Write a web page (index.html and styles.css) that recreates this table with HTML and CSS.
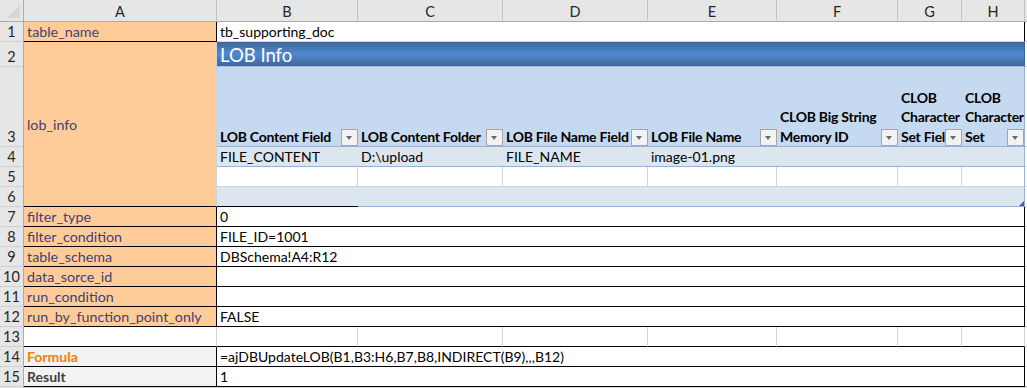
FILE: index.html
```html
<!DOCTYPE html>
<html>
<head>
<meta charset="utf-8">
<link rel="stylesheet" href="styles.css">
</head>
<body>
<div class="sheet">
  <!-- header row -->
  <div class="corner"><span class="tri"></span></div>
  <div class="ch">A</div><div class="ch">B</div><div class="ch">C</div><div class="ch">D</div>
  <div class="ch">E</div><div class="ch">F</div><div class="ch">G</div><div class="ch">H</div><div class="ch last"></div>

  <!-- row 1 -->
  <div class="rh">1</div>
  <div class="c inp b-r b-b">table_name</div>
  <div class="c merged b-r">tb_supporting_doc</div>
  <div class="c g"></div>

  <!-- rows 2-6 -->
  <div class="rh">2</div>
  <div class="c inp lob">lob_info</div>
  <div class="c banner">LOB Info</div>
  <div class="c g"></div>

  <div class="rh">3</div>
  <div class="c th">LOB Content Field<span class="dd"></span></div>
  <div class="c th">LOB Content Folder<span class="dd"></span></div>
  <div class="c th">LOB File Name Field<span class="dd"></span></div>
  <div class="c th">LOB File Name<span class="dd"></span></div>
  <div class="c th">CLOB Big String<br>Memory ID<span class="dd"></span></div>
  <div class="c th">CLOB<br>Character<br>Set Field<span class="dd"></span></div>
  <div class="c th tr">CLOB<br>Character<br>Set<span class="dd"></span></div>
  <div class="c g"></div>

  <div class="rh">4</div>
  <div class="c band">FILE_CONTENT</div>
  <div class="c band">D:\upload</div>
  <div class="c band">FILE_NAME</div>
  <div class="c band">image-01.png</div>
  <div class="c band"></div>
  <div class="c band"></div>
  <div class="c band tr"></div>
  <div class="c g"></div>

  <div class="rh">5</div>
  <div class="c plain"></div>
  <div class="c plain"></div>
  <div class="c plain"></div>
  <div class="c plain"></div>
  <div class="c plain"></div>
  <div class="c plain"></div>
  <div class="c plain tr"></div>
  <div class="c g"></div>

  <div class="rh">6</div>
  <div class="c band bk-b"></div>
  <div class="c band"></div>
  <div class="c band"></div>
  <div class="c band"></div>
  <div class="c band"></div>
  <div class="c band"></div>
  <div class="c band tr"><span class="handle"></span></div>
  <div class="c g"></div>

  <!-- rows 7-12 -->
  <div class="rh">7</div>
  <div class="c inp b-r b-b">filter_type</div>
  <div class="c merged b-r b-b">0</div>
  <div class="c g"></div>

  <div class="rh">8</div>
  <div class="c inp b-r b-b">filter_condition</div>
  <div class="c merged b-r b-b">FILE_ID=1001</div>
  <div class="c g"></div>

  <div class="rh">9</div>
  <div class="c inp b-r b-b">table_schema</div>
  <div class="c merged b-r b-b">DBSchema!A4:R12</div>
  <div class="c g"></div>

  <div class="rh">10</div>
  <div class="c inp b-r b-b">data_sorce_id</div>
  <div class="c merged b-r b-b"></div>
  <div class="c g"></div>

  <div class="rh">11</div>
  <div class="c inp b-r b-b">run_condition</div>
  <div class="c merged b-r b-b"></div>
  <div class="c g"></div>

  <div class="rh">12</div>
  <div class="c inp b-r b-b">run_by_function_point_only</div>
  <div class="c merged b-r b-b">FALSE</div>
  <div class="c g"></div>

  <!-- row 13 -->
  <div class="rh">13</div>
  <div class="c plain bk-b"></div>
  <div class="c plain bk-b"></div>
  <div class="c plain bk-b"></div>
  <div class="c plain bk-b"></div>
  <div class="c plain bk-b"></div>
  <div class="c plain bk-b"></div>
  <div class="c plain bk-b"></div>
  <div class="c plain bk-b"></div>
  <div class="c g"></div>

  <!-- rows 14-15 -->
  <div class="rh">14</div>
  <div class="c calc b-r b-b">Formula</div>
  <div class="c merged b-r b-b">=ajDBUpdateLOB(B1,B3:H6,B7,B8,INDIRECT(B9),,,B12)</div>
  <div class="c g"></div>

  <div class="rh">15</div>
  <div class="c out b-r b-b">Result</div>
  <div class="c merged b-r b-b">1</div>
  <div class="c g"></div>

  <!-- filler row -->
  <div class="rh fill"></div>
  <div class="c plain"></div><div class="c plain"></div><div class="c plain"></div><div class="c plain"></div>
  <div class="c plain"></div><div class="c plain"></div><div class="c plain"></div><div class="c plain"></div><div class="c g"></div>
</div>
</body>
</html>
```
FILE: styles.css
```css
* { box-sizing: border-box; }
html, body { margin: 0; padding: 0; background: #fff; }
body { width: 1027px; height: 388px; overflow: hidden; }

.sheet {
  display: grid;
  grid-template-columns: 24px 193px 141px 145px 145px 129px 121px 64px 63px 1fr;
  grid-template-rows: 22px 20px 25px 80px repeat(12, 20px) 1fr;
  width: 1027px;
  height: 388px;
  font-family: Lato, "Liberation Sans", sans-serif;
  font-size: 14px;
  color: #000;
}

.corner {
  background: #e6e6e6;
  border-right: 1px solid #ababab;
  border-bottom: 1px solid #ababab;
  position: relative;
}
.corner .tri {
  position: absolute;
  right: 3px;
  bottom: 3px;
  width: 0;
  height: 0;
  border-left: 13px solid transparent;
  border-bottom: 13px solid #d6d6d6;
}

.ch {
  background: #e6e6e6;
  border-right: 1px solid #c3c3c3;
  border-bottom: 1px solid #ababab;
  color: #262626;
  display: flex;
  align-items: center;
  justify-content: center;
  font-size: 14.5px;
  padding-top: 2px;
}
.ch.last { border-right: none; }

.rh {
  background: #e6e6e6;
  border-right: 1px solid #ababab;
  border-bottom: 1px solid #d0d0d0;
  color: #262626;
  display: flex;
  align-items: flex-end;
  justify-content: center;
  line-height: 19px;
  font-size: 14.5px;
}
.rh.fill { border-bottom: none; }

.c {
  border-right: 1px solid #d4d4d4;
  border-bottom: 1px solid #d4d4d4;
  padding: 0 3px;
  line-height: 19px;
  white-space: nowrap;
  overflow: hidden;
  display: flex;
  align-items: flex-end;
  position: relative;
}
.g { border-right: none; }

.merged {
  grid-column: span 7;
  background: #fff;
}

.b-r { border-right: 1px solid #000; }
.b-b { border-bottom: 1px solid #000; }
.bk-b { border-bottom: 1px solid #000; }

.inp {
  background: #ffcc99;
  color: #3f3f76;
  font-size: 14.3px;
}
.lob {
  grid-row: span 5;
  align-items: center;
  border-right: 1px solid #c6d4e6;
  border-bottom: 1px solid #000;
}

.banner {
  grid-column: span 7;
  color: #fff;
  font-size: 18.5px;
  line-height: 24px;
  align-items: center;
  padding-left: 3px;
  padding-top: 1px;
  background: linear-gradient(to bottom, #3b669a 0%, #4f86cc 45%, #4f86cc 55%, #3b669a 100%);
  border-right: 1px solid #3b669a;
  border-bottom: 1px solid #a9c1e0;
}

.th {
  background: #c5d9f1;
  border-right: none;
  border-bottom: 1px solid #95b3d7;
  font-weight: bold;
  white-space: normal;
  line-height: 19.5px;
  letter-spacing: -0.25px;
  padding: 0 1px 0 3px;
  overflow: visible;
}
.tr { border-right: 1px solid #95b3d7; }
.th.tr { border-right: 1px solid #95b3d7; }

.band {
  background: #dce6f1;
  border-right: none;
  border-bottom: 1px solid #95b3d7;
}
.band.tr { border-right: 1px solid #95b3d7; }
.band.bk-b { border-bottom: 1px solid #000; }

.plain {
  background: #fff;
}
.sheet > .c.plain.tr { border-right: 1px solid #95b3d7; }

.dd {
  position: absolute;
  right: 0;
  bottom: 0;
  width: 17px;
  height: 17px;
  border: 1px solid #a6a6a6;
  background: #f2f2f2;
}
.dd::after {
  content: "";
  position: absolute;
  left: 4px;
  top: 6px;
  width: 0;
  height: 0;
  border-left: 3.5px solid transparent;
  border-right: 3.5px solid transparent;
  border-top: 4px solid #6a6a6a;
}

.handle {
  position: absolute;
  right: 0;
  bottom: 0;
  width: 0;
  height: 0;
  border-left: 5px solid transparent;
  border-bottom: 5px solid #3f5faa;
}

.calc {
  background: #f2f2f2;
  color: #fa7d00;
  font-weight: bold;
}
.out {
  background: #f2f2f2;
  color: #3f3f3f;
  font-weight: bold;
}
```
